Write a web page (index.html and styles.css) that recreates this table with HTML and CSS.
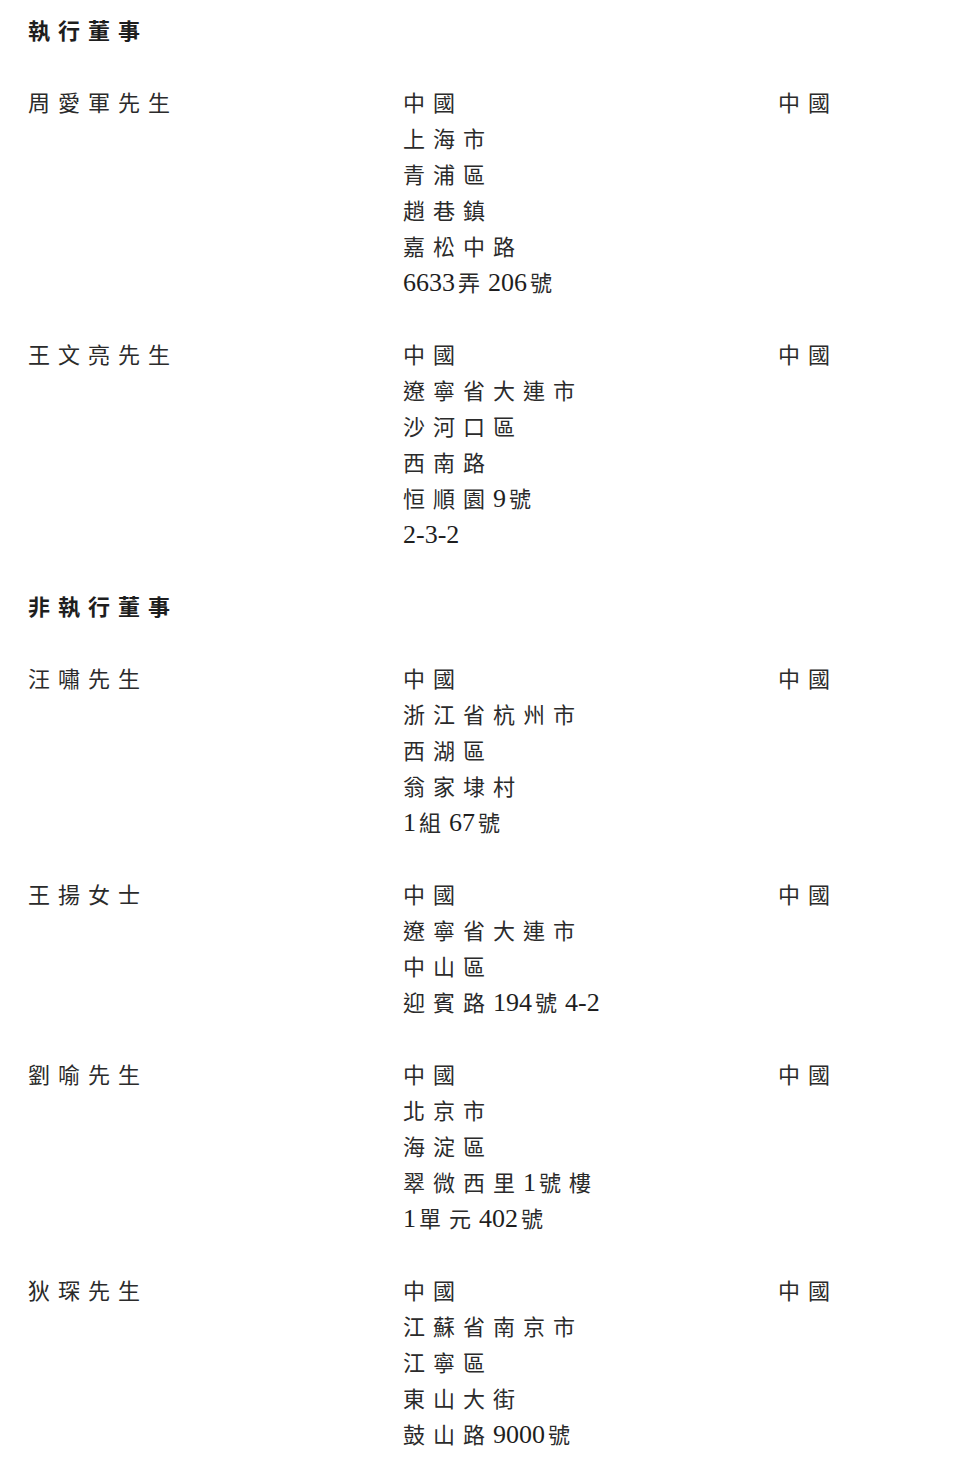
FILE: index.html
```html
<!DOCTYPE html>
<html lang="zh-Hant">
<head>
<meta charset="utf-8">
<link rel="stylesheet" href="styles.css">
</head>
<body>
<div class="doc">
  <h2 class="heading">執行董事</h2>
  <div class="row">
    <div class="name">周愛軍先生</div>
    <div class="addr">中國<br>上海市<br>青浦區<br>趙巷鎮<br>嘉松中路<br><span class="n">6633</span>弄<span class="n">206</span>號</div>
    <div class="nat">中國</div>
  </div>
  <div class="row">
    <div class="name">王文亮先生</div>
    <div class="addr">中國<br>遼寧省大連市<br>沙河口區<br>西南路<br>恒順園<span class="n">9</span>號<br><span class="n">2-3-2</span></div>
    <div class="nat">中國</div>
  </div>
  <h2 class="heading">非執行董事</h2>
  <div class="row">
    <div class="name">汪嘯先生</div>
    <div class="addr">中國<br>浙江省杭州市<br>西湖區<br>翁家埭村<br><span class="n">1</span>組<span class="n">67</span>號</div>
    <div class="nat">中國</div>
  </div>
  <div class="row">
    <div class="name">王揚女士</div>
    <div class="addr">中國<br>遼寧省大連市<br>中山區<br>迎賓路<span class="n">194</span>號<span class="n">4-2</span></div>
    <div class="nat">中國</div>
  </div>
  <div class="row">
    <div class="name">劉喻先生</div>
    <div class="addr">中國<br>北京市<br>海淀區<br>翠微西里<span class="n">1</span>號樓<br><span class="n">1</span>單元<span class="n">402</span>號</div>
    <div class="nat">中國</div>
  </div>
  <div class="row">
    <div class="name">狄琛先生</div>
    <div class="addr">中國<br>江蘇省南京市<br>江寧區<br>東山大街<br>鼓山路<span class="n">9000</span>號</div>
    <div class="nat">中國</div>
  </div>
</div>
</body>
</html>
```

FILE: styles.css
```css
html, body {
  margin: 0;
  padding: 0;
  background: #ffffff;
}
body {
  font-family: "Noto Sans CJK TC", "Noto Sans CJK SC", sans-serif;
  font-size: 22px;
  line-height: 36px;
  color: #2b2b2b;
  letter-spacing: 8px;
}
.doc {
  padding: 11px 0 0 28px;
}
.heading {
  margin: 0 0 36px 0;
  font-size: 22px;
  line-height: 36px;
  font-weight: 700;
  color: #1e1e1e;
}
.row {
  display: grid;
  grid-template-columns: 375px 375px 1fr;
  margin-bottom: 36px;
}
.n {
  font-family: "Liberation Serif", serif;
  font-size: 26px;
  line-height: 1;
  letter-spacing: 0;
  margin-right: 3px;
  color: #1e1e1e;
}
```
